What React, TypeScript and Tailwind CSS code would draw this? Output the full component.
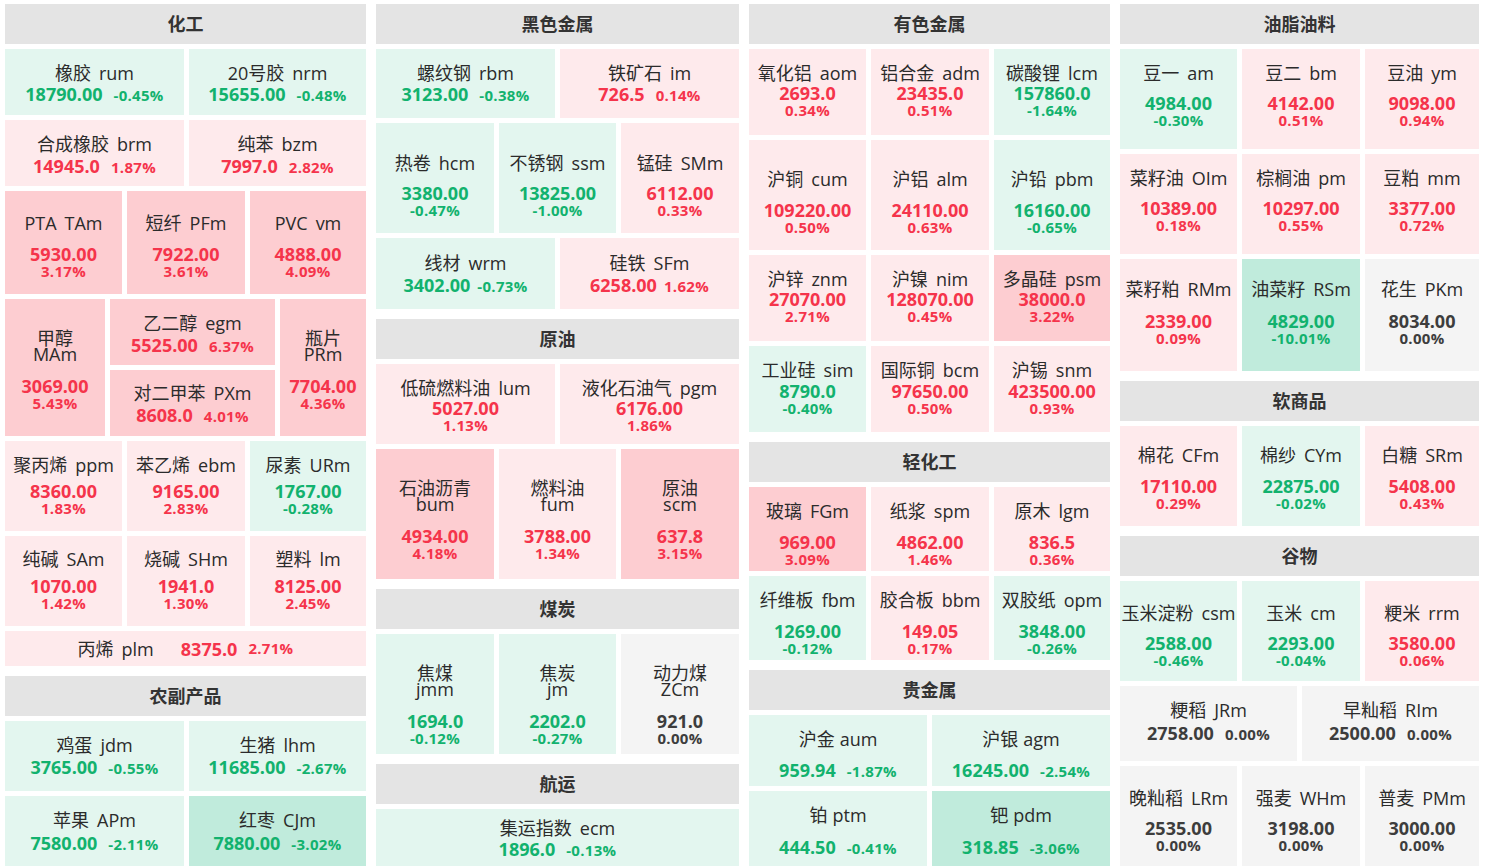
import React from "react";

type Tile = {
  n: string;
  c: string;
  p: string;
  r: string;
  w: string;
  t?: "i" | "s" | "w" | "r";
  h?: string;
  pt?: string;
  mt?: string;
  sep?: string;
  pg?: string;
};

type Block = { w: string; sub: Tile[] };
type Item = Tile | Block;
type Row = { h: string; t: "i" | "s" | "w" | "r"; pt: string; mt: string; items: Item[]; pg?: string; sep?: string };
type Section = { title: string; rows: Row[] };

const C1: Section[] = [
  {
    title: "化工",
    rows: [
      { h: "h-[66px]", t: "i", pt: "pt-[14px]", mt: "mt-[1px]", items: [
        { n: "橡胶", c: "rum", p: "18790.00", r: "-0.45", w: "w-[179px]" },
        { n: "20号胶", c: "nrm", p: "15655.00", r: "-0.48", w: "w-[177px]" },
      ] },
      { h: "h-[66px]", t: "i", pt: "pt-[14px]", mt: "mt-[2px]", items: [
        { n: "合成橡胶", c: "brm", p: "14945.0", r: "1.87", w: "w-[179px]" },
        { n: "纯苯", c: "bzm", p: "7997.0", r: "2.82", w: "w-[177px]" },
      ] },
      { h: "h-[103px]", t: "s", pt: "pt-[22px]", mt: "mt-[12px]", items: [
        { n: "PTA", c: "TAm", p: "5930.00", r: "3.17", w: "w-[117px]" },
        { n: "短纤", c: "PFm", p: "7922.00", r: "3.61", w: "w-[118px]" },
        { n: "PVC", c: "vm", p: "4888.00", r: "4.09", w: "w-[116px]" },
      ] },
      { h: "h-[137px]", t: "w", pt: "pt-[31px]", mt: "mt-[15px]", items: [
        { n: "甲醇", c: "MAm", p: "3069.00", r: "5.43", w: "w-[100px]" },
        { w: "w-[165px]", sub: [
          { n: "乙二醇", c: "egm", p: "5525.00", r: "6.37", w: "w-full", h: "h-[66px]", t: "i", pt: "pt-[14px]", mt: "mt-[2px]" },
          { n: "对二甲苯", c: "PXm", p: "8608.0", r: "4.01", w: "w-full", h: "h-[66px]", t: "i", pt: "pt-[13px]", mt: "mt-[2px]" },
        ] },
        { n: "瓶片", c: "PRm", p: "7704.00", r: "4.36", w: "w-[86px]" },
      ] },
      { h: "h-[90px]", t: "s", pt: "pt-[14px]", mt: "mt-[7px]", items: [
        { n: "聚丙烯", c: "ppm", p: "8360.00", r: "1.83", w: "w-[117px]" },
        { n: "苯乙烯", c: "ebm", p: "9165.00", r: "2.83", w: "w-[118px]" },
        { n: "尿素", c: "URm", p: "1767.00", r: "-0.28", w: "w-[116px]" },
      ] },
      { h: "h-[90px]", t: "s", pt: "pt-[13px]", mt: "mt-[8px]", items: [
        { n: "纯碱", c: "SAm", p: "1070.00", r: "1.42", w: "w-[117px]" },
        { n: "烧碱", c: "SHm", p: "1941.0", r: "1.30", w: "w-[118px]" },
        { n: "塑料", c: "lm", p: "8125.00", r: "2.45", w: "w-[116px]" },
      ] },
      { h: "h-[35px]", t: "r", pt: "", mt: "", items: [
        { n: "丙烯", c: "plm", p: "8375.0", r: "2.71", w: "w-full" },
      ] },
    ],
  },
  {
    title: "农副产品",
    rows: [
      { h: "h-[70px]", t: "i", pt: "pt-[14px]", mt: "mt-[2px]", items: [
        { n: "鸡蛋", c: "jdm", p: "3765.00", r: "-0.55", w: "w-[179px]" },
        { n: "生猪", c: "lhm", p: "11685.00", r: "-2.67", w: "w-[177px]" },
      ] },
      { h: "h-[70px]", t: "i", pt: "pt-[14px]", mt: "mt-[3px]", items: [
        { n: "苹果", c: "APm", p: "7580.00", r: "-2.11", w: "w-[179px]" },
        { n: "红枣", c: "CJm", p: "7880.00", r: "-3.02", w: "w-[177px]" },
      ] },
    ],
  },
];

const C2: Section[] = [
  {
    title: "黑色金属",
    rows: [
      { h: "h-[69px]", t: "i", pt: "pt-[14px]", mt: "mt-[1px]", items: [
        { n: "螺纹钢", c: "rbm", p: "3123.00", r: "-0.38", w: "w-[179px]" },
        { n: "铁矿石", c: "im", p: "726.5", r: "0.14", w: "w-[179px]" },
      ] },
      { h: "h-[110px]", t: "s", pt: "pt-[30px]", mt: "mt-[11px]", items: [
        { n: "热卷", c: "hcm", p: "3380.00", r: "-0.47", w: "w-[118px]" },
        { n: "不锈钢", c: "ssm", p: "13825.00", r: "-1.00", w: "w-[117px]" },
        { n: "锰硅", c: "SMm", p: "6112.00", r: "0.33", w: "w-[118px]" },
      ] },
      { h: "h-[71px]", t: "i", pt: "pt-[15px]", mt: "mt-[2px]", pg: "gap-[7px]", items: [
        { n: "线材", c: "wrm", p: "3402.00", r: "-0.73", w: "w-[179px]" },
        { n: "硅铁", c: "SFm", p: "6258.00", r: "1.62", w: "w-[179px]" },
      ] },
    ],
  },
  {
    title: "原油",
    rows: [
      { h: "h-[80px]", t: "s", pt: "pt-[14px]", mt: "mt-[1px]", items: [
        { n: "低硫燃料油", c: "lum", p: "5027.00", r: "1.13", w: "w-[179px]" },
        { n: "液化石油气", c: "pgm", p: "6176.00", r: "1.86", w: "w-[179px]" },
      ] },
      { h: "h-[130px]", t: "w", pt: "pt-[31px]", mt: "mt-[15px]", items: [
        { n: "石油沥青", c: "bum", p: "4934.00", r: "4.18", w: "w-[118px]" },
        { n: "燃料油", c: "fum", p: "3788.00", r: "1.34", w: "w-[117px]" },
        { n: "原油", c: "scm", p: "637.8", r: "3.15", w: "w-[118px]" },
      ] },
    ],
  },
  {
    title: "煤炭",
    rows: [
      { h: "h-[120px]", t: "w", pt: "pt-[31px]", mt: "mt-[15px]", items: [
        { n: "焦煤", c: "jmm", p: "1694.0", r: "-0.12", w: "w-[118px]" },
        { n: "焦炭", c: "jm", p: "2202.0", r: "-0.27", w: "w-[117px]" },
        { n: "动力煤", c: "ZCm", p: "921.0", r: "0.00", w: "w-[118px]" },
      ] },
    ],
  },
  {
    title: "航运",
    rows: [
      { h: "h-[57px]", t: "i", pt: "pt-[9px]", mt: "mt-[1px]", items: [
        { n: "集运指数", c: "ecm", p: "1896.0", r: "-0.13", w: "w-full" },
      ] },
    ],
  },
];

const C3: Section[] = [
  {
    title: "有色金属",
    rows: [
      { h: "h-[86px]", t: "s", pt: "pt-[14px]", mt: "mt-[1px]", items: [
        { n: "氧化铝", c: "aom", p: "2693.0", r: "0.34", w: "w-[117px]" },
        { n: "铝合金", c: "adm", p: "23435.0", r: "0.51", w: "w-[118px]" },
        { n: "碳酸锂", c: "lcm", p: "157860.0", r: "-1.64", w: "w-[116px]" },
      ] },
      { h: "h-[110px]", t: "s", pt: "pt-[29px]", mt: "mt-[12px]", items: [
        { n: "沪铜", c: "cum", p: "109220.00", r: "0.50", w: "w-[117px]" },
        { n: "沪铝", c: "alm", p: "24110.00", r: "0.63", w: "w-[118px]" },
        { n: "沪铅", c: "pbm", p: "16160.00", r: "-0.65", w: "w-[116px]" },
      ] },
      { h: "h-[86px]", t: "s", pt: "pt-[14px]", mt: "mt-[1px]", items: [
        { n: "沪锌", c: "znm", p: "27070.00", r: "2.71", w: "w-[117px]" },
        { n: "沪镍", c: "nim", p: "128070.00", r: "0.45", w: "w-[118px]" },
        { n: "多晶硅", c: "psm", p: "38000.0", r: "3.22", w: "w-[116px]" },
      ] },
      { h: "h-[86px]", t: "s", pt: "pt-[14px]", mt: "mt-[2px]", items: [
        { n: "工业硅", c: "sim", p: "8790.0", r: "-0.40", w: "w-[117px]" },
        { n: "国际铜", c: "bcm", p: "97650.00", r: "0.50", w: "w-[118px]" },
        { n: "沪锡", c: "snm", p: "423500.00", r: "0.93", w: "w-[116px]" },
      ] },
    ],
  },
  {
    title: "轻化工",
    rows: [
      { h: "h-[84px]", t: "s", pt: "pt-[14px]", mt: "mt-[12px]", items: [
        { n: "玻璃", c: "FGm", p: "969.00", r: "3.09", w: "w-[117px]" },
        { n: "纸浆", c: "spm", p: "4862.00", r: "1.46", w: "w-[118px]" },
        { n: "原木", c: "lgm", p: "836.5", r: "0.36", w: "w-[116px]" },
      ] },
      { h: "h-[84px]", t: "s", pt: "pt-[14px]", mt: "mt-[12px]", items: [
        { n: "纤维板", c: "fbm", p: "1269.00", r: "-0.12", w: "w-[117px]" },
        { n: "胶合板", c: "bbm", p: "149.05", r: "0.17", w: "w-[118px]" },
        { n: "双胶纸", c: "opm", p: "3848.00", r: "-0.26", w: "w-[116px]" },
      ] },
    ],
  },
  {
    title: "贵金属",
    rows: [
      { h: "h-[71px]", t: "i", pt: "pt-[14px]", mt: "mt-[11px]", sep: "ml-[5px]", items: [
        { n: "沪金", c: "aum", p: "959.94", r: "-1.87", w: "w-[178px]" },
        { n: "沪银", c: "agm", p: "16245.00", r: "-2.54", w: "w-[178px]" },
      ] },
      { h: "h-[75px]", t: "i", pt: "pt-[14px]", mt: "mt-[12px]", sep: "ml-[5px]", items: [
        { n: "铂", c: "ptm", p: "444.50", r: "-0.41", w: "w-[178px]" },
        { n: "钯", c: "pdm", p: "318.85", r: "-3.06", w: "w-[178px]" },
      ] },
    ],
  },
];

const C4: Section[] = [
  {
    title: "油脂油料",
    rows: [
      { h: "h-[100px]", t: "s", pt: "pt-[14px]", mt: "mt-[11px]", items: [
        { n: "豆一", c: "am", p: "4984.00", r: "-0.30", w: "w-[117px]" },
        { n: "豆二", c: "bm", p: "4142.00", r: "0.51", w: "w-[118px]" },
        { n: "豆油", c: "ym", p: "9098.00", r: "0.94", w: "w-[114px]" },
      ] },
      { h: "h-[100px]", t: "s", pt: "pt-[14px]", mt: "mt-[11px]", items: [
        { n: "菜籽油", c: "OIm", p: "10389.00", r: "0.18", w: "w-[117px]" },
        { n: "棕榈油", c: "pm", p: "10297.00", r: "0.55", w: "w-[118px]" },
        { n: "豆粕", c: "mm", p: "3377.00", r: "0.72", w: "w-[114px]" },
      ] },
      { h: "h-[112px]", t: "s", pt: "pt-[20px]", mt: "mt-[13px]", items: [
        { n: "菜籽粕", c: "RMm", p: "2339.00", r: "0.09", w: "w-[117px]" },
        { n: "油菜籽", c: "RSm", p: "4829.00", r: "-10.01", w: "w-[118px]" },
        { n: "花生", c: "PKm", p: "8034.00", r: "0.00", w: "w-[114px]" },
      ] },
    ],
  },
  {
    title: "软商品",
    rows: [
      { h: "h-[100px]", t: "s", pt: "pt-[19px]", mt: "mt-[12px]", items: [
        { n: "棉花", c: "CFm", p: "17110.00", r: "0.29", w: "w-[117px]" },
        { n: "棉纱", c: "CYm", p: "22875.00", r: "-0.02", w: "w-[118px]" },
        { n: "白糖", c: "SRm", p: "5408.00", r: "0.43", w: "w-[114px]" },
      ] },
    ],
  },
  {
    title: "谷物",
    rows: [
      { h: "h-[100px]", t: "s", pt: "pt-[22px]", mt: "mt-[11px]", items: [
        { n: "玉米淀粉", c: "csm", p: "2588.00", r: "-0.46", w: "w-[117px]" },
        { n: "玉米", c: "cm", p: "2293.00", r: "-0.04", w: "w-[118px]" },
        { n: "粳米", c: "rrm", p: "3580.00", r: "0.06", w: "w-[114px]" },
      ] },
      { h: "h-[75px]", t: "i", pt: "pt-[14px]", mt: "mt-[3px]", items: [
        { n: "粳稻", c: "JRm", p: "2758.00", r: "0.00", w: "w-[177px]" },
        { n: "早籼稻", c: "RIm", p: "2500.00", r: "0.00", w: "w-[177px]" },
      ] },
      { h: "h-[100px]", t: "s", pt: "pt-[22px]", mt: "mt-[11px]", items: [
        { n: "晚籼稻", c: "LRm", p: "2535.00", r: "0.00", w: "w-[117px]" },
        { n: "强麦", c: "WHm", p: "3198.00", r: "0.00", w: "w-[118px]" },
        { n: "普麦", c: "PMm", p: "3000.00", r: "0.00", w: "w-[114px]" },
      ] },
    ],
  },
];

function tone(r: string) {
  const v = parseFloat(r);
  const deep = Math.abs(v) >= 3;
  if (v > 0) return { bg: deep ? "bg-[#fdcdd1]" : "bg-[#feeaec]", fg: "text-[#f5344b]" };
  if (v < 0) return { bg: deep ? "bg-[#c0ebdc]" : "bg-[#e3f6ef]", fg: "text-[#12b26e]" };
  return { bg: "bg-[#f4f4f4]", fg: "text-[#3d3d3d]" };
}

function TileView({ t, row }: { t: Tile; row: Row }) {
  const type = t.t ?? row.t;
  const pt = t.pt ?? row.pt;
  const mt = t.mt ?? row.mt;
  const sep = t.sep ?? row.sep ?? "ml-2";
  const pg = t.pg ?? row.pg ?? "gap-[11px]";
  const { bg, fg } = tone(t.r);
  const size = `${t.w} ${t.h ?? "h-full"} shrink-0`;

  if (type === "r") {
    return (
      <div className={`${size} ${bg} flex items-center justify-center`}>
        <span className="text-[18px] leading-[20px] text-[#2b2b2b] whitespace-nowrap">
          {t.n}
          <span className="ml-2">{t.c}</span>
        </span>
        <span className={`ml-[27px] text-[18px] leading-[20px] font-bold ${fg}`}>{t.p}</span>
        <span className={`ml-[11px] text-[15px] font-bold tracking-[0.3px] ${fg}`}>{t.r}%</span>
      </div>
    );
  }

  const name =
    type === "w" ? (
      <div className="text-[18px] leading-[16px] text-[#2b2b2b] text-center whitespace-nowrap">
        <div>{t.n}</div>
        <div>{t.c}</div>
      </div>
    ) : (
      <div className="text-[18px] leading-[20px] text-[#2b2b2b] whitespace-nowrap">
        {t.n}
        <span className={sep}>{t.c}</span>
      </div>
    );

  return (
    <div className={`${size} ${bg} flex flex-col items-center ${pt}`}>
      {name}
      {type === "i" ? (
        <div className={`${mt} flex items-baseline ${pg} font-bold ${fg} whitespace-nowrap`}>
          <span className="text-[18px] leading-[20px]">{t.p}</span>
          <span className="text-[15px] leading-[16px] tracking-[0.3px]">{t.r}%</span>
        </div>
      ) : (
        <>
          <div className={`${mt} text-[18px] leading-[19px] font-bold ${fg} whitespace-nowrap`}>{t.p}</div>
          <div className={`text-[15px] leading-[15px] font-bold tracking-[0.3px] ${fg} whitespace-nowrap`}>{t.r}%</div>
        </>
      )}
    </div>
  );
}

function RowView({ row }: { row: Row }) {
  return (
    <div className={`${row.h} flex gap-[5px]`}>
      {row.items.map((it, i) =>
        "sub" in it ? (
          <div key={i} className={`${it.w} shrink-0 flex flex-col gap-[5px]`}>
            {it.sub.map((s, j) => (
              <TileView key={j} t={s} row={row} />
            ))}
          </div>
        ) : (
          <TileView key={i} t={it} row={row} />
        )
      )}
    </div>
  );
}

function Column({ sections, w }: { sections: Section[]; w: string }) {
  return (
    <div className={`${w} shrink-0 flex flex-col gap-[10px]`}>
      {sections.map((s) => (
        <div key={s.title} className="flex flex-col gap-[5px]">
          <div className="h-[40px] bg-[#e4e4e4] flex items-center justify-center text-[18px] font-bold text-[#333]">
            {s.title}
          </div>
          {s.rows.map((r, i) => (
            <RowView key={i} row={r} />
          ))}
        </div>
      ))}
    </div>
  );
}

export default function App() {
  return (
    <div
      className="w-[1485px] h-[868px] overflow-hidden bg-white flex gap-[10px] pl-[5px] pt-[4px]"
      style={{ fontFamily: '"Open Sans", "Noto Sans CJK SC", sans-serif' }}
    >
      <Column sections={C1} w="w-[361px]" />
      <Column sections={C2} w="w-[363px]" />
      <Column sections={C3} w="w-[361px]" />
      <Column sections={C4} w="w-[359px]" />
    </div>
  );
}
